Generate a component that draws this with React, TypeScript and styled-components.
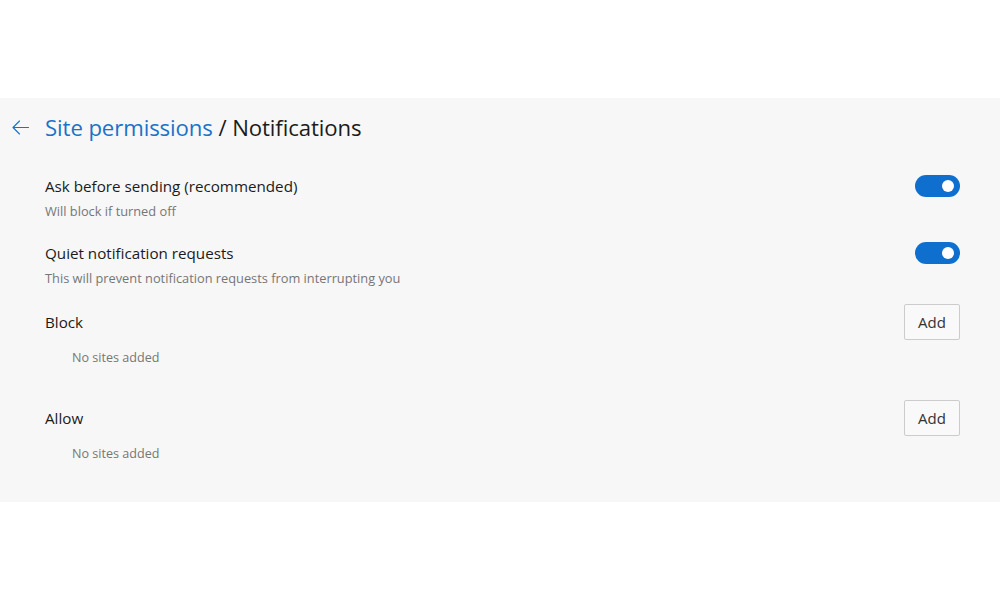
import React from "react";
import styled, { createGlobalStyle } from "styled-components";

const Global = createGlobalStyle`
  html, body { margin: 0; padding: 0; background: #ffffff; }
  body { font-family: "Open Sans", "Noto Sans", "Liberation Sans", sans-serif; }
`;

const Page = styled.div`
  padding-top: 98px;
  width: 1000px;
  height: 600px;
  box-sizing: border-box;
`;

const Panel = styled.section`
  background: #f7f7f7;
  height: 404px;
  box-sizing: border-box;
  padding: 0 40px 0 0;
  display: flex;
  flex-direction: column;
`;

const Header = styled.header`
  height: 58px;
  display: flex;
  align-items: center;
`;

const BackButton = styled.button`
  width: 45px;
  height: 40px;
  padding: 0 0 0 12px;
  margin: 0;
  border: none;
  background: transparent;
  display: flex;
  align-items: center;
  justify-content: flex-start;
  color: #1a73c9;
  cursor: pointer;
`;

const Title = styled.h1`
  margin: 0;
  font-size: 22.2px;
  font-weight: 400;
  color: #1b1b1b;
  letter-spacing: -0.1px;
`;

const Crumb = styled.span`
  color: #1a73c9;
`;

const Body = styled.div`
  padding-left: 45px;
  padding-top: 18px;
  display: flex;
  flex-direction: column;
`;

const SettingRow = styled.div<{ $gap?: number }>`
  display: flex;
  justify-content: space-between;
  align-items: flex-start;
  margin-top: ${(p) => p.$gap ?? 0}px;
`;

const TextCol = styled.div`
  display: flex;
  flex-direction: column;
`;

const Label = styled.div`
  font-size: 15.2px;
  line-height: 24px;
  color: #1b1b1b;
`;

const Hint = styled.div`
  font-size: 12.8px;
  line-height: 22px;
  margin-top: 2px;
  color: #767676;
`;

const Toggle = styled.div<{ $on: boolean }>`
  width: 45px;
  height: 22px;
  margin-top: 1px;
  border-radius: 11px;
  background: ${(p) => (p.$on ? "#0f6fcf" : "#ffffff")};
  display: flex;
  align-items: center;
  justify-content: ${(p) => (p.$on ? "flex-end" : "flex-start")};
  padding: 0 6px;
  box-sizing: border-box;
`;

const Knob = styled.span`
  width: 12px;
  height: 12px;
  border-radius: 50%;
  background: #ffffff;
`;

const ListHeader = styled.div<{ $gap: number }>`
  display: flex;
  justify-content: space-between;
  align-items: center;
  height: 36px;
  margin-top: ${(p) => p.$gap}px;
`;

const AddButton = styled.button`
  width: 56px;
  height: 36px;
  border: 1px solid #cccccc;
  border-radius: 2px;
  background: #f9f9f9;
  font-family: inherit;
  font-size: 15px;
  color: #333333;
  padding: 0;
`;

const Empty = styled.div`
  font-size: 12.6px;
  line-height: 22px;
  color: #767676;
  padding-left: 27px;
  margin-top: 7px;
`;

function BackArrow() {
  return (
    <svg width="17" height="15" viewBox="0 0 17 15" fill="none">
      <path
        d="M16.5 7.5H1M7.5 1L1 7.5L7.5 14"
        stroke="currentColor"
        strokeWidth="1.1"
        strokeLinecap="round"
        strokeLinejoin="round"
      />
    </svg>
  );
}

export default function App() {
  return (
    <Page>
      <Global />
      <Panel>
        <Header>
          <BackButton aria-label="Back">
            <BackArrow />
          </BackButton>
          <Title>
            <Crumb>Site permissions</Crumb> / Notifications
          </Title>
        </Header>
        <Body>
          <SettingRow>
            <TextCol>
              <Label>Ask before sending (recommended)</Label>
              <Hint>Will block if turned off</Hint>
            </TextCol>
            <Toggle $on>
              <Knob />
            </Toggle>
          </SettingRow>
          <SettingRow $gap={19}>
            <TextCol>
              <Label>Quiet notification requests</Label>
              <Hint>This will prevent notification requests from interrupting you</Hint>
            </TextCol>
            <Toggle $on>
              <Knob />
            </Toggle>
          </SettingRow>
          <ListHeader $gap={15}>
            <Label>Block</Label>
            <AddButton>Add</AddButton>
          </ListHeader>
          <Empty>No sites added</Empty>
          <ListHeader $gap={31}>
            <Label>Allow</Label>
            <AddButton>Add</AddButton>
          </ListHeader>
          <Empty>No sites added</Empty>
        </Body>
      </Panel>
    </Page>
  );
}
